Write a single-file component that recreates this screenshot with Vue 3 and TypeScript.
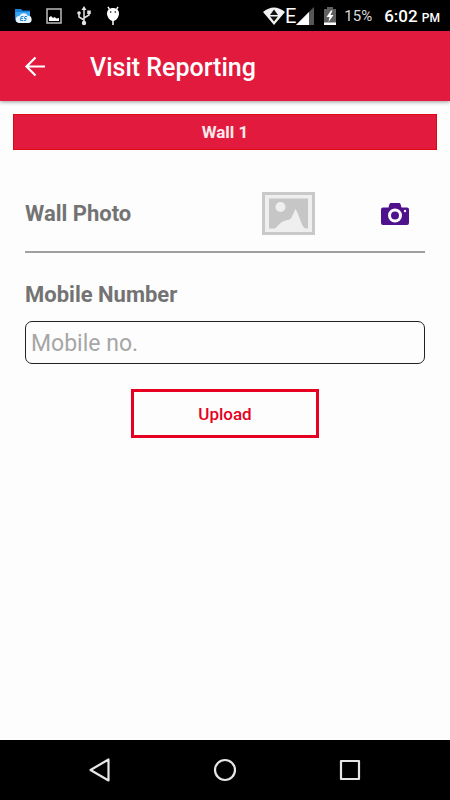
<script setup lang="ts">
import { ref } from 'vue'

const battery = ref<number>(15)
const mobile = ref<string>('')
</script>

<template>
  <div class="screen">
    <div class="status">
      <div class="notices">
        <svg width="18" height="18" viewBox="0 0 18 18" aria-hidden="true">
          <path d="M1 2h6l1.500 1.500H16v11H2.500L1 13z" fill="#1680d8" />
          <path d="M1.500 5H16v10H2z" fill="#38a5f2" />
          <path d="M5.500 16a3.500 3.500 0 0 1-.2-7 4.800 4.800 0 0 1 8.500-.2 3.600 3.600 0 0 1 .5 7.200z" fill="#e8f5ff" />
          <path d="M9.500 9.500H7.200l-.8 4H9M6.800 11.500h2M13 9.500h-2l-.6 2h1.800l-.5 2h-2" fill="none" stroke="#2188d8" stroke-width="1" />
        </svg>
        <svg width="16" height="16" viewBox="0 0 16 16" aria-hidden="true">
          <rect x="1" y="1" width="14" height="14" fill="none" stroke="#bcbcbc" stroke-width="1.500" />
          <path d="M3 13V9.500l2-1.500 2 2 1.500-1 2 1.500 2.500-.5v3z" fill="#fff" />
        </svg>
        <svg width="16" height="20" viewBox="0 0 16 20" fill="none" stroke="#e4e4e4" stroke-width="1.500" aria-hidden="true">
          <path d="M8 3v14M8 14L3 11V7M8 12l5-3V6" />
          <path d="M8 0l2.500 4h-5z" fill="#e4e4e4" stroke="none" />
          <circle cx="3" cy="7" r="1.800" fill="#e4e4e4" stroke="none" />
          <path d="M11.200 4.500h3.600v3.500h-3.600z" fill="#e4e4e4" stroke="none" />
          <circle cx="8" cy="17" r="2.200" fill="#e4e4e4" stroke="none" />
        </svg>
        <svg width="14" height="20" viewBox="0 0 14 20" aria-hidden="true">
          <path d="M3.500 3.500L2 .8M10.500 3.500L12 .8M7 13v6" stroke="#fff" stroke-width="1.500" />
          <path d="M7 2c3.500 0 6 2.300 6 5.500S10.300 15 7 15 1 10.700 1 7.500 3.500 2 7 2z" fill="#fff" />
          <circle cx="4.700" cy="6" r=".8" /><circle cx="9.300" cy="6" r=".8" />
        </svg>
      </div>
      <div class="system">
        <svg width="22" height="18" viewBox="0 0 22 18" aria-hidden="true">
          <path d="M0 5Q11-4 22 5L11 18z" fill="#f2f2f2" />
          <path d="M11 2.500L15 8H7zM7 9.500h8l-4 5z" fill="#111" />
        </svg>
        <span class="net">E</span>
        <svg class="signal" width="18" height="18" viewBox="0 0 18 18" aria-hidden="true">
          <path d="M18 0v18H0z" fill="#575757" />
          <path d="M13 5v13H0z" fill="#fff" />
        </svg>
        <svg class="cell" width="12" height="18" viewBox="0 0 12 18" aria-hidden="true">
          <path d="M3 0h6v2h3v16H0V2h3z" fill="#606060" />
          <path d="M0 15.500h12V18H0z" fill="#fff" />
          <path d="M7 3.500L2.500 10h3L4.500 15 9.500 8h-3l2-4.500z" fill="#fff" />
        </svg>
        <span class="percent">{{ battery }}%</span>
        <span class="clock">6:02 <small>PM</small></span>
      </div>
    </div>

    <header class="appbar">
      <button class="back" type="button" aria-label="Back">
        <svg width="22" height="22" viewBox="0 0 22 22" fill="none" stroke="#fff" stroke-width="2.200" aria-hidden="true">
          <path d="M21 11.500H3M11.500 2.500l-9 9 9 9" />
        </svg>
      </button>
      <h1>Visit Reporting</h1>
    </header>

    <main>
      <h2>Wall 1</h2>
      <form @submit.prevent>
        <div class="photo">
          <span class="label">Wall Photo</span>
          <svg class="preview" width="53" height="43" viewBox="0 0 53 43" aria-hidden="true">
            <path d="M0 0h53v43H0z" fill="#c9c9c9" />
            <path d="M3 3h47v37H3z" fill="#f0eff0" />
            <path d="M7 6.500h39V36.500H7z" fill="#c6c6c6" />
            <circle cx="18.500" cy="15" r="5" fill="#f0eff0" />
            <path d="M12 37c3-1 5-6 9-7.500 3-1.500 7-1 8.500-4L33.500 17c3 5 4 9 5.500 13 1.500 4 3 6 5 7z" fill="#f0eff0" />
          </svg>
          <button class="camera" type="button" aria-label="Take photo">
            <svg width="28" height="22" viewBox="0 0 28 22" aria-hidden="true">
              <path d="M2 4.500h5.500L8.500 1Q8.800 0 10 0h8q1.200 0 1.500 1l1 3.500H26q2 0 2 2V20q0 2-2 2H2q-2 0-2-2V6.500q0-2 2-2z" fill="#4f128c" />
              <circle cx="14" cy="12.500" r="5.500" fill="#4f128c" stroke="#fff" stroke-width="3" />
              <circle cx="24" cy="8" r="1.200" fill="#fff" />
            </svg>
          </button>
        </div>
        <label class="label" for="mobile">Mobile Number</label>
        <input id="mobile" v-model="mobile" type="tel" placeholder="Mobile no." />
        <button class="upload" type="submit">Upload</button>
      </form>
    </main>

    <nav>
      <button type="button" aria-label="Back">
        <svg width="24" height="24" viewBox="0 0 24 24" aria-hidden="true"><path d="M20.500 1.500v21L2.500 12z" /></svg>
      </button>
      <button type="button" aria-label="Home">
        <svg width="24" height="24" viewBox="0 0 24 24" aria-hidden="true"><circle cx="12" cy="12" r="10" /></svg>
      </button>
      <button type="button" aria-label="Recent apps">
        <svg width="24" height="24" viewBox="0 0 24 24" aria-hidden="true"><path d="M3 3h18v18H3z" /></svg>
      </button>
    </nav>
  </div>
</template>

<style>
body {
  background: #fdfdfd;
}
</style>

<style scoped>
.screen {
  display: flex;
  flex-direction: column;
  min-height: 100vh;
  font-family: Roboto, "Liberation Sans", sans-serif;
}

svg {
  display: block;
  flex: none;
}

button {
  padding: 0;
  border: 0;
  background: none;
  font: inherit;
}

.status {
  display: flex;
  align-items: center;
  justify-content: space-between;
  height: 31px;
  padding: 0 10px 0 14px;
  background: #000;
  color: #fff;
}

.notices {
  display: flex;
  align-items: center;
  gap: 14px;
}

.system {
  display: flex;
  align-items: center;
}

.net {
  font-size: 20px;
}

.signal {
  margin-right: 10px;
}

.cell {
  margin-right: 8px;
}

.percent {
  margin-right: 12px;
  color: #d8d8d8;
  font-size: 15px;
}

.clock {
  font-size: 17px;
  font-weight: 500;
}

.clock small {
  font-size: 12px;
}

.appbar {
  display: flex;
  align-items: center;
  gap: 44px;
  height: 70px;
  padding: 0 24px;
  background: #e21b3e;
  box-shadow: 0 1px 4px rgba(0, 0, 0, 0.4);
  color: #fff;
}

h1 {
  margin: 4px 0 0;
  font-size: 25px;
  font-weight: 500;
  line-height: 32px;
}

main {
  flex: 1;
  padding: 13px;
}

h2 {
  margin: 0;
  border: 1px solid #de0712;
  background: #e21b3e;
  color: #fbe9ec;
  font-size: 17px;
  font-weight: 700;
  line-height: 34px;
  text-align: center;
}

form {
  display: flex;
  flex-direction: column;
  padding: 24px 12px;
}

.photo {
  box-sizing: border-box;
  display: flex;
  align-items: center;
  height: 79px;
  padding-top: 2px;
  margin-bottom: 28px;
  border-bottom: 2px solid #a0a0a0;
}

.label {
  color: #737373;
  font-size: 22px;
  font-weight: 700;
  line-height: 28px;
}

.preview {
  margin-left: auto;
}

.camera {
  margin: 0 16px 0 66px;
}

input {
  box-sizing: border-box;
  width: 100%;
  height: 43px;
  margin: 12px 0 25px;
  padding: 2px 5px 0;
  border: 1px solid #222;
  border-radius: 7px;
  background: transparent;
  color: #333;
  font: 23px/28px Roboto, "Liberation Sans", sans-serif;
}

input::placeholder {
  color: #a6a6a6;
}

.upload {
  align-self: center;
  width: 47%;
  height: 49px;
  border: 3px solid #e60021;
  color: #e60021;
  font-size: 17px;
  font-weight: 500;
}

nav {
  display: flex;
  align-items: center;
  justify-content: space-between;
  height: 60px;
  padding: 0 88px;
  background: #000;
}

nav svg {
  fill: none;
  stroke: #e6e6e6;
  stroke-width: 2.200;
  stroke-linejoin: round;
}
</style>
